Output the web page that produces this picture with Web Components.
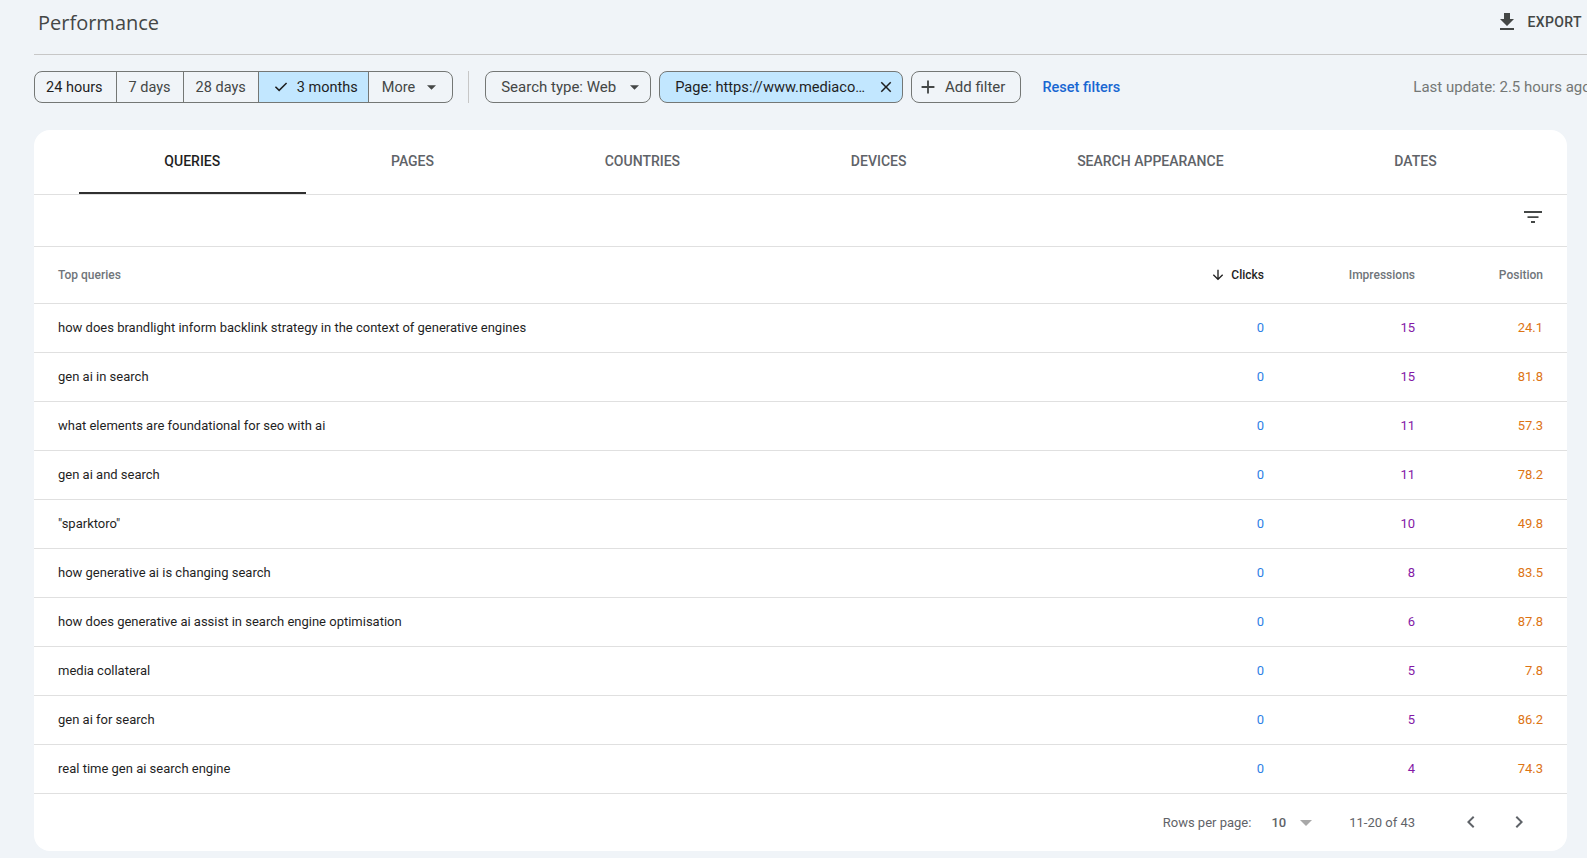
<!DOCTYPE html>
<html>
<head>
<meta charset="utf-8">
<title>Performance</title>
<style>
  html, body { margin: 0; height: 100%; overflow: hidden; background: #f0f4f8; }
  body { font-family: Roboto, "Liberation Sans", sans-serif; color: #1f1f1f; }
</style>
</head>
<body>
<perf-app></perf-app>
<script>
const ICONS = {
  download: '<svg width="24" height="24" viewBox="0 0 24 24" fill="#444746"><path d="M19 9h-4V3H9v6H5l7 7 7-7zM5 18v2h14v-2H5z"/></svg>',
  check: '<svg width="18" height="18" viewBox="0 0 24 24" fill="#1f1f1f"><path d="M9.55 18 3.85 12.3l1.43-1.43 4.27 4.28 9.17-9.18 1.43 1.43z"/></svg>',
  close: '<svg width="18" height="18" viewBox="0 0 24 24" fill="#1f1f1f"><path d="M6.4 19 5 17.6 10.6 12 5 6.4 6.4 5 12 10.6 17.6 5 19 6.4 13.4 12 19 17.6 17.6 19 12 13.4z"/></svg>',
  plus: '<svg width="22" height="22" viewBox="0 0 24 24" fill="#444746"><path d="M11 19v-6H5v-2h6V5h2v6h6v2h-6v6z"/></svg>',
  caret: '<svg width="9" height="5" viewBox="0 0 10 5" fill="#444746"><path d="M0 0h10L5 5z"/></svg>',
  filter: '<svg width="24" height="24" viewBox="0 0 24 24" fill="#444746"><path d="M3 6h18v2H3zM6.5 11.2h11v1.8h-11zM10 16h4v2h-4z"/></svg>',
  arrow: '<svg width="16" height="16" viewBox="0 0 24 24" fill="#1f1f1f"><path d="M11 4h2v12.2l5.3-5.3 1.4 1.4L12 20l-7.7-7.7 1.4-1.4 5.3 5.3z"/></svg>',
  prev: '<svg width="24" height="24" viewBox="0 0 24 24" fill="#5f6368"><path d="M15.4 7.4 14 6l-6 6 6 6 1.4-1.4L10.8 12z"/></svg>',
  next: '<svg width="24" height="24" viewBox="0 0 24 24" fill="#5f6368"><path d="M8.6 16.6 10 18l6-6-6-6-1.4 1.4 4.6 4.6z"/></svg>'
};

const QUERIES = [
  ['how does brandlight inform backlink strategy in the context of generative engines', 0, 15, '24.1'],
  ['gen ai in search', 0, 15, '81.8'],
  ['what elements are foundational for seo with ai', 0, 11, '57.3'],
  ['gen ai and search', 0, 11, '78.2'],
  ['"sparktoro"', 0, 10, '49.8'],
  ['how generative ai is changing search', 0, 8, '83.5'],
  ['how does generative ai assist in search engine optimisation', 0, 6, '87.8'],
  ['media collateral', 0, 5, '7.8'],
  ['gen ai for search', 0, 5, '86.2'],
  ['real time gen ai search engine', 0, 4, '74.3']
];

class ShadowEl extends HTMLElement {
  constructor() {
    super();
    this.attachShadow({ mode: 'open' });
  }
  connectedCallback() {
    this.shadowRoot.innerHTML = this.markup();
  }
}

class PerfHeader extends ShadowEl {
  markup() {
    return `
      <style>
        :host { display: flex; align-items: center; justify-content: space-between; height: 54px; margin-left: 34px; border-bottom: 1px solid #c7c7c7; box-sizing: content-box; }
        h1 { margin: 0 0 10px 4px; font: 400 20px "Open Sans", Roboto, sans-serif; color: #444746; }
        .export { display: flex; align-items: center; gap: 8px; margin: 0 5px 10px 0; font: 500 14px Roboto, sans-serif; letter-spacing: .4px; color: #444746; }
        svg { display: block; }
      </style>
      <h1>Performance</h1>
      <div class="export">${ICONS.download}<span>EXPORT</span></div>`;
  }
}

class DateRange extends ShadowEl {
  markup() {
    return `
      <style>
        :host { display: flex; height: 32px; box-sizing: border-box; border: 1px solid #747775; border-radius: 8px; overflow: hidden; flex: none; }
        span { display: flex; align-items: center; padding: 0 12px; font-size: 14.5px; color: #444746; border-left: 1px solid #747775; white-space: nowrap; }
        style + span { border-left: 0; color: #1f1f1f; padding: 0 13px 0 11px; }
        .on { background: #c2e7ff; color: #1f1f1f; padding: 0 10px 0 13px; gap: 7px; }
        .more { gap: 12px; padding: 0 16px 0 13px; }
      </style>
      <span>24 hours</span><span>7 days</span><span>28 days</span>
      <span class="on">${ICONS.check}3 months</span>
      <span class="more">More ${ICONS.caret}</span>`;
  }
}

class FilterChip extends ShadowEl {
  markup() {
    return `
      <style>
        :host { display: flex; align-items: center; height: 32px; box-sizing: border-box; border: 1px solid #747775; border-radius: 8px; font-size: 15px; color: #444746; white-space: nowrap; flex: none; padding: 0 11px 0 15px; gap: 14px; }
        :host([active]) { background: #c2e7ff; color: #1f1f1f; font-size: 14.65px; gap: 12px; padding: 0 7px 0 15px; }
        :host([lead]) { padding: 0 15px 0 5px; gap: 6px; }
      </style>
      <slot name="lead"></slot><slot></slot><slot name="trail"></slot>`;
  }
}

class PerfToolbar extends ShadowEl {
  markup() {
    return `
      <style>
        :host { display: flex; align-items: center; height: 32px; margin: 16px 0 0 34px; overflow: hidden; }
        .rule { width: 1px; height: 32px; background: #c7c7c7; margin: 0 16px 0 15px; flex: none; }
        .gap { margin-left: 8px; }
        a { margin-left: 21px; font-size: 14.5px; font-weight: 500; color: #1967d2; white-space: nowrap; flex: none; }
        .update { margin-left: 293px; font-size: 15px; color: #747775; white-space: nowrap; flex: none; }
        svg { display: block; }
      </style>
      <date-range></date-range>
      <div class="rule"></div>
      <filter-chip>Search type: Web<span slot="trail">${ICONS.caret}</span></filter-chip>
      <filter-chip class="gap" active>Page: https://www.mediaco…<span slot="trail">${ICONS.close}</span></filter-chip>
      <filter-chip class="gap" lead><span slot="lead">${ICONS.plus}</span>Add filter</filter-chip>
      <a>Reset filters</a>
      <span class="update">Last update: 2.5 hours ago</span>`;
  }
}

class PerfTabs extends ShadowEl {
  markup() {
    const names = ['QUERIES', 'PAGES', 'COUNTRIES', 'DEVICES', 'SEARCH APPEARANCE', 'DATES'];
    return `
      <style>
        :host { display: flex; height: 64px; padding: 0 45px; border-bottom: 1px solid #e0e0e0; }
        div { flex: auto; display: flex; align-items: center; justify-content: center; box-sizing: border-box; height: 64px; padding: 0 0 2px; font-size: 14px; font-weight: 500; color: #5f6368; }
        .on { color: #1f1f1f; border-bottom: 2px solid #303030; padding: 0; }
      </style>
      ${names.map((n, i) => `<div class="${i ? '' : 'on'}">${n}</div>`).join('')}`;
  }
}

class FilterBar extends ShadowEl {
  markup() {
    return `
      <style>
        :host { display: flex; align-items: center; justify-content: flex-end; height: 44px; padding: 0 22px 7px 0; border-bottom: 1px solid #e0e0e0; }
        svg { display: block; }
      </style>
      ${ICONS.filter}`;
  }
}

class QueryRow extends ShadowEl {
  markup() {
    const head = this.hasAttribute('head');
    const [q, c, i, p] = ['query', 'clicks', 'impressions', 'position'].map(a => this.getAttribute(a));
    return `
      <style>
        :host { display: grid; grid-template-columns: 1fr 160px 151px 128px; align-items: center; height: 46px; padding: 0 24px 2px; border-bottom: 1px solid #e0e0e0; font-size: 13px; }
        :host([head]) { height: 56px; padding-bottom: 0; font-size: 12px; color: #70757a; font-weight: 500; }
        div { text-align: right; white-space: nowrap; }
        .q { text-align: left; color: #1f1f1f; }
        :host([head]) .q { color: #70757a; }
        .c { color: #2f7fe6; display: flex; justify-content: flex-end; align-items: center; gap: 5px; }
        .i { color: #8419a6; }
        .p { color: #dd7414; }
        :host([head]) .c { color: #1f1f1f; }
        :host([head]) .i, :host([head]) .p { color: #70757a; }
        svg { display: block; }
      </style>
      <div class="q">${q}</div>
      <div class="c">${head ? ICONS.arrow : ''}${c}</div>
      <div class="i">${i}</div>
      <div class="p">${p}</div>`;
  }
}

class TableFooter extends ShadowEl {
  markup() {
    return `
      <style>
        :host { display: flex; align-items: center; justify-content: flex-end; height: 55px; font-size: 13px; color: #5f6368; padding: 0 36px 2px 0; }
        span { padding-top: 2px; }
        .size { margin-left: 20px; font-weight: 500; }
        .tri { width: 0; height: 0; padding: 0; margin: 2px 0 0 14px; border: 6px solid transparent; border-top: 6px solid #a8a8a8; border-bottom: 0; }
        .range { margin-left: 37px; }
        svg { display: block; }
        .pg { display: flex; gap: 24px; margin-left: 44px; }
      </style>
      <span>Rows per page:</span>
      <span class="size">10</span><span class="tri"></span>
      <span class="range">11-20 of 43</span>
      <div class="pg">${ICONS.prev}${ICONS.next}</div>`;
  }
}

class PerfCard extends ShadowEl {
  markup() {
    return `
      <style>
        :host { display: block; width: 1533px; height: 721px; margin: 27px 0 0 34px; background: #fff; border-radius: 16px; overflow: hidden; }
      </style>
      <slot></slot>`;
  }
}

class PerfApp extends ShadowEl {
  markup() {
    const rows = QUERIES.map(r => `<query-row query='${r[0]}' clicks="${r[1]}" impressions="${r[2]}" position="${r[3]}"></query-row>`).join('');
    return `
      <style>:host { display: block; }</style>
      <perf-header></perf-header>
      <perf-toolbar></perf-toolbar>
      <perf-card>
        <perf-tabs></perf-tabs>
        <filter-bar></filter-bar>
        <query-row head query="Top queries" clicks="Clicks" impressions="Impressions" position="Position"></query-row>
        ${rows}
        <table-footer></table-footer>
      </perf-card>`;
  }
}

customElements.define('perf-header', PerfHeader);
customElements.define('date-range', DateRange);
customElements.define('filter-chip', FilterChip);
customElements.define('perf-toolbar', PerfToolbar);
customElements.define('perf-tabs', PerfTabs);
customElements.define('filter-bar', FilterBar);
customElements.define('query-row', QueryRow);
customElements.define('table-footer', TableFooter);
customElements.define('perf-card', PerfCard);
customElements.define('perf-app', PerfApp);
</script>
</body>
</html>
